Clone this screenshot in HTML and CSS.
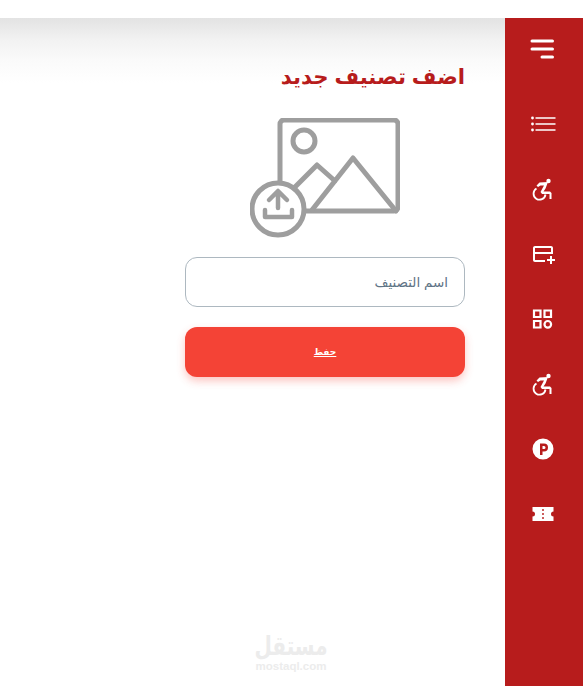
FILE: index.html
```html
<!DOCTYPE html>
<html lang="ar" dir="rtl">
<head>
    <meta charset="UTF-8">
    <meta name="viewport" content="width=device-width, initial-scale=1.0">
    <title>اضف تصنيف جديد</title>
    <link rel="stylesheet" href="styles.css">
</head>
<body>
    <div class="app">
        <nav class="side-menu">
            <a class="menu-item menu-toggle" href="#">
                <svg class="icon" viewBox="0 0 24 24"><path class="line" d="M2 4h20.500M2 12h20.500M12 20h10.500"/></svg>
            </a>
            <a class="menu-item" href="#">
                <svg class="icon" viewBox="0 0 24 24"><path class="thin" d="M5.500 6h20M5.500 12h20M5.500 18h20"/><circle class="dot" cx="2.500" cy="6" r="1.400"/><circle class="dot" cx="2.500" cy="12" r="1.400"/><circle class="dot" cx="2.500" cy="18" r="1.400"/></svg>
            </a>
            <a class="menu-item" href="#">
                <svg class="icon" viewBox="0 0 24 24"><circle class="dot" cx="18.500" cy="4" r="2.200"/><path class="wheel" d="M6.500 11.500a6 6 0 1 0 9 6"/><path class="dot" d="M6.500 8.500l3-3 8.500-.500-2.500 6.500-2 3h6.500l1.500 1.500v6h-2v-5h-7.500l-1.500-2 3.500-6.500h-3.500l-2.500 1.500z"/></svg>
            </a>
            <a class="menu-item" href="#">
                <svg class="icon" viewBox="-1 0 24 24"><path class="dot" d="M20 4H4c-1.110 0-1.990.890-1.990 2L2 18c0 1.110.890 2 2 2h10v-2H4v-6h18V6c0-1.110-.890-2-2-2zm0 6H4V6h16v4zm4 7v2h-3v3h-2v-3h-3v-2h3v-3h2v3h3z"/></svg>
            </a>
            <a class="menu-item" href="#">
                <svg class="icon" viewBox="0 0 24 24"><path class="outline" d="M4 3.500h6.500v6.500H4zM14.500 3.500H21v6.500h-6.500zM4 14h6.500v6.500H4z"/><circle class="outline" cx="17.800" cy="17.300" r="3.300"/></svg>
            </a>
            <a class="menu-item" href="#">
                <svg class="icon" viewBox="0 0 24 24"><circle class="dot" cx="18.500" cy="4" r="2.200"/><path class="wheel" d="M6.500 11.500a6 6 0 1 0 9 6"/><path class="dot" d="M6.500 8.500l3-3 8.500-.500-2.500 6.500-2 3h6.500l1.500 1.500v6h-2v-5h-7.500l-1.500-2 3.500-6.500h-3.500l-2.500 1.500z"/></svg>
            </a>
            <a class="menu-item" href="#">
                <svg class="icon" viewBox="0 0 24 24"><path class="dot" fill-rule="evenodd" d="M13 1.500a10.500 10.500 0 1 0 0 21 10.500 10.500 0 0 0 0-21zM10 6.500h4a4 4 0 0 1 0 8h-1.500v3.500H10zM12.500 9v3H14a1.500 1.500 0 0 0 0-3z"/></svg>
            </a>
            <a class="menu-item" href="#">
                <svg class="icon" viewBox="0 0 24 24"><path class="dot" d="M2.500 5h21v4.500a2.500 2.500 0 0 0 0 5V19h-21v-4.500a2.500 2.500 0 0 0 0-5z"/><path class="notch" d="M13 7v2M13 11v2M13 15v2"/></svg>
            </a>
        </nav>

        <main class="content">
            <form class="category-form">
                <h1 class="form-title">اضف تصنيف جديد</h1>
                <svg class="upload-image" viewBox="0 0 150 120">
                    <path d="M30 64V6a4 4 0 0 1 4-4h110a4 4 0 0 1 4 4v83a4 4 0 0 1-4 4H56"/>
                    <circle cx="54" cy="23" r="11"/>
                    <path d="M62 92l41-52 43 53M45 69l22-22 18 16"/>
                    <circle cx="28" cy="91" r="26"/>
                    <path class="upload-arrow" d="M28 90V74M19 82l9-9 9 9M15 92v7h27v-7"/>
                </svg>
                <input class="name-input" type="text" placeholder="اسم التصنيف">
                <button class="save-btn" type="button">حفظ</button>
            </form>
            <div class="watermark">
                <div class="watermark-ar">مستقل</div>
                <div class="watermark-en">mostaql.com</div>
            </div>
        </main>
    </div>
</body>
</html>
```

FILE: styles.css
```css
* {
    margin: 0;
    padding: 0;
    box-sizing: border-box;
}

body {
    background: #fff;
    font-family: "Liberation Sans", "DejaVu Sans", sans-serif;
    height: 686px;
    overflow: hidden;
    padding-top: 18px;
}

.app {
    display: flex;
    height: 668px;
}

.side-menu {
    width: 78px;
    background: #b71c1c;
    display: flex;
    flex-direction: column;
    align-items: center;
    gap: 41px;
    padding-top: 19px;
    padding-right: 5px;
}

.menu-item {
    display: block;
    width: 24px;
    height: 24px;
}

.menu-toggle {
    margin-bottom: 10px;
}

.icon {
    display: block;
    width: 24px;
    height: 24px;
    overflow: visible;
}

.line {
    fill: none;
    stroke: #fff;
    stroke-width: 3;
    stroke-linecap: round;
}

.thin {
    fill: none;
    stroke: #fff;
    stroke-width: 1.600;
}

.dot {
    fill: #fff;
}

.outline {
    fill: none;
    stroke: #fff;
    stroke-width: 2.200;
}

.wheel {
    fill: none;
    stroke: #fff;
    stroke-width: 1.800;
}

.notch {
    fill: none;
    stroke: #b71c1c;
    stroke-width: 1.400;
}

.content {
    flex: 1;
    position: relative;
    background: linear-gradient(#e3e3e3, #e6e6e6 5px, #f2f2f2 22px, #fafafa 42px, #fff 65px);
    padding: 44px 40px 0 0;
}

.category-form {
    width: 280px;
    display: flex;
    flex-direction: column;
}

.form-title {
    color: #b71c1c;
    font-size: 21.250px;
    font-weight: bold;
    line-height: 30px;
}

.upload-image {
    display: block;
    width: 150px;
    height: 120px;
    margin: 26px 65px 19px;
    align-self: center;
    fill: none;
    stroke: #9e9e9e;
    stroke-width: 5;
    stroke-linejoin: round;
    stroke-linecap: round;
}

.upload-arrow {
    stroke-width: 4.500;
}

.name-input {
    height: 50px;
    border: 1px solid #adb8c0;
    border-radius: 12px;
    padding: 0 16px;
    font-family: inherit;
    font-size: 13.500px;
    background: #fff;
}

.name-input::placeholder {
    color: #5f7486;
    opacity: 1;
}

.save-btn {
    height: 50px;
    margin-top: 20px;
    background: #f44336;
    border: none;
    border-radius: 12px;
    box-shadow: 0 4px 8px rgba(244, 67, 54, 0.3);
    color: #fff;
    font-family: inherit;
    font-size: 9px;
    font-weight: bold;
    text-decoration: underline;
}

.watermark {
    position: absolute;
    left: 254px;
    top: 615px;
    width: 74px;
    text-align: center;
    color: #ececec;
    font-weight: bold;
}

.watermark-ar {
    font-size: 20px;
    line-height: 27px;
    transform: scaleY(1.300);
}

.watermark-en {
    font-size: 11.500px;
    line-height: 13px;
}
```
